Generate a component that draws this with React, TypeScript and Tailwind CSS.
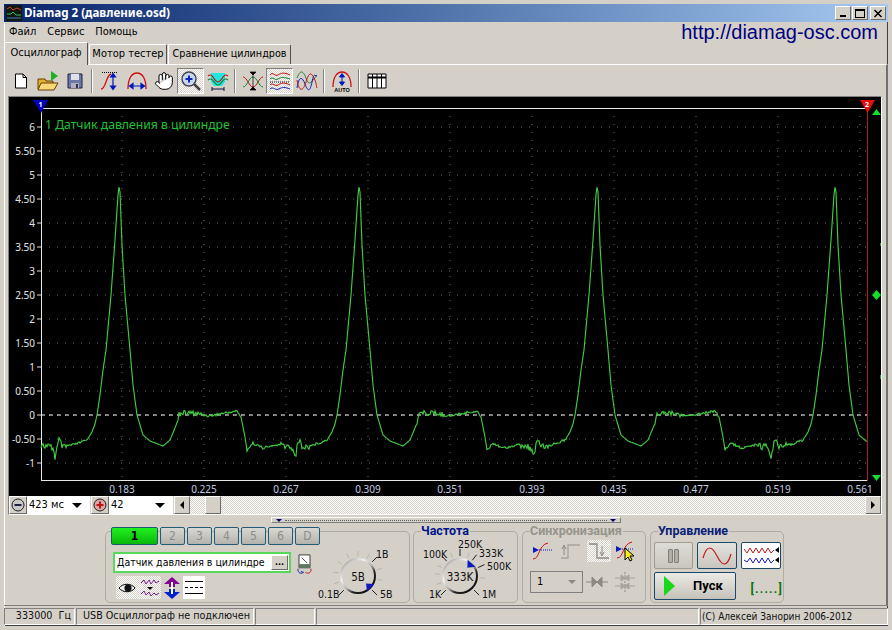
import type { ReactNode } from 'react';
import { Hand } from 'lucide-react';

const UI = "font-['DejaVu_Sans_Condensed','Roboto',sans-serif]";
const DITHER = 'bg-[repeating-conic-gradient(#ffffff_0_25%,#d4d0c8_0_50%)] bg-[length:2px_2px]';
const SUNKEN = 'border border-t-[#808080] border-l-[#808080] border-b-white border-r-white';
const RAISED = 'border border-t-white border-l-white border-b-[#6b6b6b] border-r-[#6b6b6b]';
const KNOB_FONT = 'DejaVu Sans Condensed, Roboto, sans-serif';

// one period of the pressure curve: offset from the peak, screen y
const SHAPE: [number, number][] = [
    [-78, 445], [-66, 448], [-64, 457], [-60, 440], [-56, 448], [-40, 443], [-32, 440], [-27, 432], [-24, 424],
    [-22, 415], [-19, 395], [-16, 370], [-13, 350], [-8, 295], [-4, 240], [-1, 195], [0, 187], [1, 192], [3, 245],
    [6, 295], [11, 350], [14, 385], [18, 415], [24, 435], [31, 441], [44, 446], [51, 440], [58, 423], [60, 413],
    [75, 413], [90, 416], [100, 414], [118, 411], [122, 417], [126, 437], [128, 450], [134, 443], [144, 448],
    [158, 445], [162, 445],
];
const PEAKS = [119, 359, 597, 835];

function noise(x: number) {
    const s = Math.sin(x * 12.9898) * 43758.5453;
    return (s - Math.floor(s)) * 2 - 1;
}

function tracePoints() {
    const pts: string[] = [];
    for (let x = 41; x <= 867; x++) {
        const peak = PEAKS.find((p) => x - p <= 160 && x - p >= -78) ?? 835;
        const dx = x - peak;
        let y = 445;
        for (let i = 0; i < SHAPE.length - 1; i++) {
            const [x0, y0] = SHAPE[i];
            const [x1, y1] = SHAPE[i + 1];
            if (dx >= x0 && dx <= x1) {
                y = y0 + ((y1 - y0) * (dx - x0)) / (x1 - x0);
                break;
            }
        }
        let amp = 0;
        if (dx >= -78 && dx < -48) amp = 3.5;
        else if (dx >= -48 && dx < -30) amp = 1.2;
        else if (dx >= 58 && dx < 85) amp = 2.5;
        else if (dx >= 85 && dx < 122) amp = 1.2;
        else if (dx >= 128) amp = 1.2;
        pts.push(`${x},${(y + noise(x) * amp).toFixed(1)}`);
    }
    return pts.join(' ');
}

const yLabels = ['6', '5.50', '5', '4.50', '4', '3.50', '3', '2.50', '2', '1.50', '1', '0.50', '0', '-0.50', '-1'];
const xLabels = ['0.183', '0.225', '0.267', '0.309', '0.351', '0.393', '0.435', '0.477', '0.519', '0.561'];

function Chart() {
    return (
        <svg viewBox="9 97 872 399" className="block w-[872px] h-[399px] bg-black">
            {yLabels.map((l, i) => {
                const y = 127 + i * 24;
                return (
                    <g key={l}>
                        <line x1="41" x2="867" y1={y} y2={y} stroke="#6a6a6a" strokeDasharray="1 7" />
                        <line x1="37" x2="41" y1={y} y2={y} stroke="#e0e0e0" />
                        <text x="35" y={y + 4} textAnchor="end" fontSize="10" fill="#e4e4e4" fontFamily="Noto Sans">{l}</text>
                    </g>
                );
            })}
            {xLabels.map((l, i) => {
                const x = 122 + i * 82;
                return (
                    <g key={l}>
                        <line x1={x} x2={x} y1="108" y2="484" stroke="#6a6a6a" strokeDasharray="1 7" />
                        <text x={x} y="493" textAnchor="middle" fontSize="10" fill="#c4cce0" fontFamily="Noto Sans">{l}</text>
                    </g>
                );
            })}
            <line x1="41" x2="867" y1="415" y2="415" stroke="#ffffff" strokeDasharray="4 4" />
            <path d="M41 108.5H867M41.5 108V480M41 480.5H867" stroke="#e8e8e8" fill="none" />
            <line x1="867.5" x2="867.5" y1="108" y2="481" stroke="#a82020" />
            <polyline points={tracePoints()} fill="none" stroke="#40cc40" strokeWidth="1.15" />
            <text x="45" y="129" fontSize="12.2" fill="#20c030" fontFamily="Noto Sans">1 Датчик давления в цилиндре</text>
            <path d="M33 100H48L41 113Z" fill="#0000c0" />
            <text x="40.5" y="107" textAnchor="middle" fontSize="7" fontWeight="700" fill="#fff" fontFamily="Noto Sans">1</text>
            <path d="M860 100H875L867.5 113Z" fill="#e01010" />
            <text x="867" y="107" textAnchor="middle" fontSize="7" fontWeight="700" fill="#fff" fontFamily="Noto Sans">2</text>
            <path d="M872 115L876.5 109L881 115Z" fill="#10e030" />
            <path d="M872 475L876.5 481L881 475Z" fill="#10e030" />
            <path d="M876.5 290L881 295L876.5 300L872 295Z" fill="#10e030" />
            <path d="M880.5 243V246M880.5 375V379" stroke="#10a030" />
        </svg>
    );
}

function Tool({ children, pressed, w = 27 }: { children: ReactNode; pressed?: boolean; w?: number }) {
    return (
        <div
            style={{ width: w }}
            className={`h-[26px] flex items-center justify-center ${pressed ? `${DITHER} border border-t-[#808080] border-l-[#808080] border-b-white border-r-white` : ''}`}
        >
            {children}
        </div>
    );
}

const Sep = () => <div className="w-[2px] h-[24px] mx-[3px] border-l border-l-[#808080] border-r border-r-white" />;

function ToolIcon({ children }: { children: ReactNode }) {
    return <svg viewBox="0 0 22 22" className="w-[22px] h-[22px]">{children}</svg>;
}

function Toolbar() {
    return (
        <div className="h-[31px] pl-[2px] flex items-center">
            <Tool>
                <ToolIcon><path d="M5.5 4H13L16.5 7.5V18H5.5Z" fill="#fff" stroke="#000" /><path d="M13 4V7.5H16.5" fill="none" stroke="#000" /></ToolIcon>
            </Tool>
            <Tool>
                <ToolIcon>
                    <path d="M1 9H8L9 11H16V19H1Z" fill="#e8b030" stroke="#604000" />
                    <path d="M4 13H21L17 20H1Z" fill="#f8d878" stroke="#604000" />
                    <path d="M14 1L21 6L14 11Z" fill="#20b020" />
                </ToolIcon>
            </Tool>
            <Tool>
                <ToolIcon>
                    <path d="M4 4H18V18H4Z" fill="#6a78a8" stroke="#202040" />
                    <path d="M7 4H15V10H7Z" fill="#e0e0e8" />
                    <path d="M7 13H15V18H7Z" fill="#b0b0bc" />
                    <path d="M12 14H14V18H12Z" fill="#303060" />
                </ToolIcon>
            </Tool>
            <Sep />
            <Tool>
                <ToolIcon>
                    <path d="M2 19C7 19 7 5 12 4" fill="none" stroke="#d01010" strokeWidth="1.3" />
                    <path d="M3 2.5H18" stroke="#000" strokeDasharray="1 1" />
                    <path d="M14 4V19M11.5 7L14 3.5L16.5 7ZM11.5 16L14 19.5L16.5 16Z" stroke="#0018c0" fill="#0018c0" strokeWidth="1.2" />
                </ToolIcon>
            </Tool>
            <Tool>
                <ToolIcon>
                    <path d="M2 19C2 8 6 3 11 3S20 8 20 19" fill="none" stroke="#d01010" strokeWidth="1.3" />
                    <path d="M4 16H18M7 13.5L3.5 16L7 18.5ZM15 13.5L18.5 16L15 18.5Z" stroke="#0018c0" fill="#0018c0" strokeWidth="1.2" />
                </ToolIcon>
            </Tool>
            <Tool>
                <Hand size={20} fill="#ffffff" stroke="#000000" strokeWidth={1.2} />
            </Tool>
            <Tool pressed>
                <ToolIcon>
                    <path d="M13 13L20 20" stroke="#404040" strokeWidth="2.5" />
                    <circle cx="9" cy="9" r="7" fill="#c8d8f0" stroke="#404050" strokeWidth="1.4" />
                    <path d="M5.5 9H12.5M9 5.5V12.5" stroke="#1020c0" strokeWidth="2" />
                </ToolIcon>
            </Tool>
            <Tool>
                <ToolIcon>
                    <path d="M4 3H18V12L15 16H7L4 12Z" fill="#20e8e0" />
                    <path d="M1 6C6 2 7 12 11 12S16 2 21 6" fill="none" stroke="#c01010" strokeWidth="1.1" />
                    <path d="M1 10C6 6 7 15 11 15S16 6 21 10" fill="none" stroke="#108030" strokeWidth="1.1" />
                    <path d="M5 19H17M5 17V21M17 17V21" stroke="#101040" />
                </ToolIcon>
            </Tool>
            <Sep />
            <Tool>
                <ToolIcon>
                    <path d="M1 7C5 7 7 17 11 17S17 7 21 7" fill="none" stroke="#c01010" />
                    <path d="M1 17C5 17 7 7 11 7S17 17 21 17" fill="none" stroke="#108030" />
                    <path d="M11 3V19M8 2H14L11 5ZM8 20H14L11 17Z" stroke="#000" fill="#000" strokeWidth="0.7" />
                </ToolIcon>
            </Tool>
            <Tool pressed>
                <ToolIcon>
                    <path d="M1 5C4 1 6 7 9 5S15 2 21 5" fill="none" stroke="#c01010" />
                    <path d="M1 9C4 6 6 11 9 9S15 7 21 9" fill="none" stroke="#108030" />
                    <path d="M1 12H21" stroke="#000" strokeDasharray="1 1" />
                    <path d="M1 15C4 12 6 17 9 15S15 12 21 15" fill="none" stroke="#c01010" />
                    <path d="M1 19C4 16 7 21 10 19S16 17 21 19" fill="none" stroke="#1018c0" />
                </ToolIcon>
            </Tool>
            <Tool>
                <ToolIcon>
                    <path d="M1 8C4 0 7 0 10 8S14 14 21 5" fill="none" stroke="#108030" />
                    <path d="M1 18C3 6 6 6 9 14S14 22 16 12 19 6 21 6" fill="none" stroke="#1018c0" />
                    <path d="M1 10C3 22 7 22 10 12S15 2 18 8 20 16 21 18" fill="none" stroke="#c01010" />
                </ToolIcon>
            </Tool>
            <Sep />
            <Tool>
                <ToolIcon>
                    <path d="M2 17C2 7 6 2 11 2S20 7 20 17" fill="none" stroke="#d01010" strokeWidth="1.3" />
                    <path d="M11 4V15M8.5 7L11 3.5L13.5 7ZM8.5 12L11 15.5L13.5 12Z" stroke="#0018c0" fill="#0018c0" />
                    <text x="11" y="21.5" textAnchor="middle" fontSize="5.5" fontWeight="700" fill="#000" fontFamily="Liberation Sans">AUTO</text>
                </ToolIcon>
            </Tool>
            <Sep />
            <Tool>
                <ToolIcon>
                    <path d="M2 4H20V18H2Z" fill="#fff" stroke="#000" />
                    <path d="M2 7.5H20" stroke="#000" strokeWidth="2" />
                    <path d="M6.5 4V18M11 4V18M15.5 4V18" stroke="#000" />
                </ToolIcon>
            </Tool>
        </div>
    );
}

function Caret() {
    return <div className="w-0 h-0 border-x-[5px] border-x-transparent border-t-[5px] border-t-black" />;
}

function Zoomer({ sign, color, text, w }: { sign: 'minus' | 'plus'; color: string; text: string; w: string }) {
    return (
        <>
            <div className={`w-[18px] h-[18px] flex items-center justify-center bg-[#d4d0c8] ${RAISED}`}>
                <svg viewBox="0 0 14 14" className="w-[14px] h-[14px]">
                    <circle cx="7" cy="7" r="6" fill={sign === 'minus' ? '#c8c8c8' : '#d8a8a8'} stroke="#202020" />
                    <path d={sign === 'minus' ? 'M3.5 7H10.5' : 'M3.5 7H10.5M7 3.5V10.5'} stroke={color} strokeWidth="2" />
                </svg>
            </div>
            <div className={`${w} h-[18px] bg-white flex items-center justify-between pl-[2px] pr-[8px] text-[11px] text-black mr-px`}>
                <span>{text}</span>
                <Caret />
            </div>
        </>
    );
}

function ScrollBtn({ dir }: { dir: 'l' | 'r' }) {
    return (
        <div className={`w-[16px] h-[18px] shrink-0 bg-[#d4d0c8] flex items-center justify-center ${RAISED}`}>
            <div className={`w-0 h-0 border-y-[4px] border-y-transparent ${dir === 'l' ? 'border-r-[4px] border-r-black' : 'border-l-[4px] border-l-black'}`} />
        </div>
    );
}

function ChartPanel() {
    return (
        <div className={`ml-[3px] w-[874px] ${SUNKEN}`}>
            <Chart />
            <div className="h-[18px] flex items-center">
                <Zoomer sign="minus" color="#202040" text="423 мс" w="w-[63px]" />
                <Zoomer sign="plus" color="#c01010" text="42" w="w-[64px]" />
                <ScrollBtn dir="l" />
                <div className={`flex-1 h-[18px] ${DITHER} pl-[15px]`}>
                    <div className={`w-[16px] h-[18px] bg-[#d4d0c8] ${RAISED}`} />
                </div>
                <ScrollBtn dir="r" />
            </div>
        </div>
    );
}

function GroupBox({ title, titleColor, className, children }: { title?: string; titleColor?: string; className: string; children: ReactNode }) {
    return (
        <div className={`relative h-[72px] border border-[#b0aca0] rounded-[5px] ${className}`}>
            {title && (
                <span className={`absolute left-[7px] -top-[9px] bg-[#d4d0c8] pr-px font-['Roboto',sans-serif] text-[12.5px] leading-[15px] font-bold ${titleColor}`}>{title}</span>
            )}
            {children}
        </div>
    );
}

type Tick = { a: number; long?: boolean };

function Knob({ id, cx, cy, label, pointer, ticks }: { id: string; cx: number; cy: number; label: string; pointer: number; ticks: Tick[] }) {
    const pos = (a: number, r: number) => {
        const rad = ((a - 90) * Math.PI) / 180;
        return [cx + Math.cos(rad) * r, cy + Math.sin(rad) * r];
    };
    const [tipX, tipY] = pos(pointer, 11);
    const [b1x, b1y] = pos(pointer - 17, 18);
    const [b2x, b2y] = pos(pointer + 17, 18);
    return (
        <g>
            <defs>
                <linearGradient id={id} x1="0.1" y1="0.1" x2="0.85" y2="0.9">
                    <stop offset="0" stopColor="#a8a8a8" />
                    <stop offset="0.3" stopColor="#f4f4f4" />
                    <stop offset="0.55" stopColor="#b0b0b0" />
                    <stop offset="0.75" stopColor="#202020" />
                    <stop offset="1" stopColor="#101010" />
                </linearGradient>
            </defs>
            {ticks.map((t, i) => {
                const [x0, y0] = pos(t.a, 20);
                const [x1, y1] = pos(t.a, t.long ? 27 : 25);
                return <line key={i} x1={x0} y1={y0} x2={x1} y2={y1} stroke={t.long ? '#202020' : '#b8b4a8'} />;
            })}
            <circle cx={cx} cy={cy} r="17" fill="#d4d0c8" stroke={`url(#${id})`} strokeWidth="2" />
            <path d={`M${tipX} ${tipY}L${b1x} ${b1y}L${b2x} ${b2y}Z`} fill="#1018c0" />
            <text x={cx} y={cy + 4.5} textAnchor="middle" fontSize="11.5" fill="#101010" fontFamily={KNOB_FONT}>{label}</text>
        </g>
    );
}

const AMP_TICKS: Tick[] = [
    { a: -135, long: true }, { a: -108 }, { a: -81 }, { a: -54 }, { a: -27 }, { a: 0 }, { a: 27 }, { a: 45, long: true }, { a: 72 }, { a: 100 }, { a: 135, long: true },
];
const FREQ_TICKS: Tick[] = [
    { a: -135, long: true }, { a: -110 }, { a: -85 }, { a: -65 }, { a: -42, long: true }, { a: -22 }, { a: 0, long: true }, { a: 22 }, { a: 38, long: true }, { a: 65, long: true }, { a: 95 }, { a: 135, long: true },
];

function ChannelBtn({ label, active }: { label: string; active?: boolean }) {
    if (active) {
        return (
            <div className="w-[47px] h-[18px] rounded-[2px] border border-[#1a5a70] bg-gradient-to-b from-[#20f020] to-[#08b808] flex items-center justify-center text-[12px] font-bold text-black">
                {label}
            </div>
        );
    }
    return (
        <div className="w-[25px] h-[18px] rounded-[2px] border border-[#245a78] bg-gradient-to-b from-[#d8d8d4] to-[#b4b2ac] flex items-center justify-center text-[12px] text-[#8c8c88]">
            {label}
        </div>
    );
}

function ChannelGroup() {
    return (
        <GroupBox className="w-[305px]">
            <div className="flex flex-col">
                <div className="flex gap-[2px] ml-[5px] -mt-[5px]">
                    <ChannelBtn label="1" active />
                    {['2', '3', '4', '5', '6', 'D'].map((l) => <ChannelBtn key={l} label={l} />)}
                </div>
                <div className="flex ml-[7px] mt-[7px]">
                    <div className="flex flex-col w-[200px]">
                        <div className="flex items-start h-[24px]">
                            <div className="w-[178px] h-[21px] bg-white border-[2px] border-[#58d858] flex items-center justify-between pl-[2px] pr-[1px] text-[10.5px] text-black shrink-0">
                                <span className="whitespace-nowrap">Датчик давления в цилиндре</span>
                                <div className={`w-[17px] h-[15px] shrink-0 bg-[#d4d0c8] flex items-center justify-center text-[9px] leading-none font-bold ${RAISED}`}>...</div>
                            </div>
                            <svg viewBox="0 0 18 24" className="w-[17px] h-[22px] ml-[5px] mt-[2px] shrink-0">
                                <path d="M3 1H15V15H3Z" fill="#fff" stroke="#303030" />
                                <path d="M3 11H15V15H3Z" fill="#607860" />
                                <path d="M6 4L12 10" stroke="#404040" />
                                <path d="M2 16C1 21 6 22 8 20M8 20L5 19" fill="none" stroke="#1018c0" />
                                <path d="M16 16C17 21 12 22 10 20" fill="none" stroke="#c01010" />
                            </svg>
                        </div>
                        <div className="flex ml-[3px]">
                            <div className={`w-[22px] h-[23px] ${DITHER} flex items-center justify-center`}>
                                <svg viewBox="0 0 18 12" className="w-[18px] h-[12px]">
                                    <path d="M1 6C5 1 13 1 17 6C13 11 5 11 1 6Z" fill="#f0f0f0" stroke="#000" />
                                    <circle cx="10" cy="6" r="3.6" fill="#101010" />
                                </svg>
                            </div>
                            <div className={`w-[23px] h-[23px] ${DITHER} flex items-center justify-center`}>
                                <svg viewBox="0 0 20 20" className="w-[20px] h-[20px]">
                                    <path d="M1 5L4 2L6 6L9 2L11 6L14 2L16 5L19 3" fill="none" stroke="#801890" />
                                    <path d="M7 9H13L10 12Z" fill="#000" />
                                    <path d="M1 16L4 13L6 17L9 14L11 18L14 15L16 17L19 15" fill="none" stroke="#801890" />
                                </svg>
                            </div>
                            <div className="w-[22px] h-[23px] flex items-center justify-center">
                                <svg viewBox="0 0 18 22" className="w-[18px] h-[22px]">
                                    <path d="M9 0L17 7H12V10H6V7H1Z" fill="#800090" />
                                    <path d="M9 22L17 15H12V12H6V15H1Z" fill="#0020d0" />
                                    <path d="M8 5H10V17H8Z" fill="#fff" />
                                </svg>
                            </div>
                            <div className="w-[22px] h-[23px] bg-white flex flex-col justify-center gap-[5px] px-[2px]">
                                <div className="h-px bg-black" />
                                <div className="h-px border-t border-dashed border-black" />
                                <div className="h-px bg-black" />
                            </div>
                        </div>
                    </div>
                    <svg viewBox="315 545 80 57" className="w-[80px] h-[57px] -mt-[6px] ml-[2px] shrink-0">
                        <Knob id="ampRing" cx={358} cy={575} label="5В" pointer={133} ticks={AMP_TICKS} />
                        <text x="376" y="557" fontSize="10.5" fill="#101010" fontFamily={KNOB_FONT}>1В</text>
                        <text x="318" y="597" fontSize="10.5" fill="#101010" fontFamily={KNOB_FONT}>0.1В</text>
                        <text x="380" y="597" fontSize="10.5" fill="#101010" fontFamily={KNOB_FONT}>5В</text>
                    </svg>
                </div>
            </div>
        </GroupBox>
    );
}

function FreqGroup() {
    return (
        <GroupBox title="Частота" titleColor="text-[#00148c]" className="w-[105px]">
            <svg viewBox="414 535 103 66" className="w-[103px] h-[66px] mt-[4px]">
                <Knob id="freqRing" cx={460} cy={575} label="333K" pointer={42} ticks={FREQ_TICKS} />
                <text x="458" y="547" fontSize="10.5" fill="#101010" fontFamily={KNOB_FONT}>250K</text>
                <text x="423" y="557" fontSize="10.5" fill="#101010" fontFamily={KNOB_FONT}>100K</text>
                <text x="479" y="556" fontSize="10.5" fill="#101010" fontFamily={KNOB_FONT}>333K</text>
                <text x="487" y="569" fontSize="10.5" fill="#101010" fontFamily={KNOB_FONT}>500K</text>
                <text x="429" y="597" fontSize="10.5" fill="#101010" fontFamily={KNOB_FONT}>1K</text>
                <text x="482" y="597" fontSize="10.5" fill="#101010" fontFamily={KNOB_FONT}>1M</text>
            </svg>
        </GroupBox>
    );
}

function SyncGroup() {
    return (
        <GroupBox title="Синхронизация" titleColor="text-[#96948c]" className="w-[124px]">
            <div className="flex flex-col pl-[7px] pt-[8px]">
                <div className="flex items-center h-[22px] gap-[3px]">
                    <svg viewBox="0 0 24 20" className="w-[24px] h-[20px]">
                        <path d="M3 18C10 18 8 4 18 2" fill="none" stroke="#d01010" />
                        <path d="M3 6L9 9L3 12Z" fill="#1018c0" />
                        <path d="M9 9H22" stroke="#1018c0" strokeDasharray="1 1" />
                    </svg>
                    <svg viewBox="0 0 24 20" className="w-[24px] h-[20px] ml-[2px]">
                        <path d="M2 17H9V4H21" fill="none" stroke="#a8a49c" strokeWidth="1.3" />
                        <path d="M5 14V5M3 8L5 4L7 8" fill="none" stroke="#8c8a82" />
                    </svg>
                    <div className={`w-[24px] h-[22px] ${DITHER} flex items-center justify-center ml-[1px]`}>
                        <svg viewBox="0 0 24 20" className="w-[24px] h-[20px]">
                            <path d="M2 3H10V17H22" fill="none" stroke="#8c8a82" strokeWidth="1.3" />
                            <path d="M15 5V14M13 11L15 15L17 11" fill="none" stroke="#8c8a82" />
                        </svg>
                    </div>
                    <svg viewBox="0 0 24 22" className="w-[24px] h-[22px]">
                        <path d="M3 18C10 18 8 4 18 2" fill="none" stroke="#d01010" />
                        <path d="M2 6L8 9L2 12Z" fill="#1018c0" />
                        <path d="M8 9H20" stroke="#1018c0" strokeDasharray="1 1" />
                        <path d="M11 8V20L14 17L16 21L18 20L16 16H20Z" fill="#f8e820" stroke="#000" />
                    </svg>
                </div>
                <div className="flex items-center mt-[9px]">
                    <div className="w-[53px] h-[22px] border border-[#808080] flex items-center justify-between px-[6px] text-[11px] text-black">
                        <span>1</span>
                        <div className="w-0 h-0 border-x-[4px] border-x-transparent border-t-[4px] border-t-[#8c8a82]" />
                    </div>
                    <svg viewBox="0 0 24 18" className="w-[24px] h-[18px] ml-[2px]">
                        <path d="M1 9H8M23 9H16M7 4L12 9L7 14ZM17 4L12 9L17 14Z" stroke="#8c8a82" fill="#8c8a82" />
                    </svg>
                    <svg viewBox="0 0 24 22" className="w-[24px] h-[22px] ml-[4px]">
                        <path d="M12 1V21" stroke="#8c8a82" strokeDasharray="2 1" />
                        <path d="M2 7H8M22 7H16M22 15H16M2 15H8M8 4L12 7L8 10ZM16 4L12 7L16 10ZM8 12L12 15L8 18ZM16 12L12 15L16 18Z" stroke="#a8a49c" fill="#a8a49c" />
                    </svg>
                </div>
            </div>
        </GroupBox>
    );
}

function ControlGroup() {
    return (
        <GroupBox title="Управление" titleColor="text-[#0a1e78]" className="w-[134px]">
            <div className="flex flex-col pl-[3px] pt-[10px]">
                <div className="flex h-[27px] gap-[4px]">
                    <div className="w-[39px] h-[27px] border border-[#a09c94] rounded-[2px] bg-gradient-to-b from-[#dedcd6] to-[#c8c6be] flex items-center justify-center gap-px">
                        <div className="w-[5px] h-[14px] rounded-[1px] border border-[#80807a] bg-[#b0aea6]" />
                        <div className="w-[5px] h-[14px] rounded-[1px] border border-[#80807a] bg-[#b0aea6]" />
                    </div>
                    <div className="w-[40px] h-[27px] border border-[#1a4a68] rounded-[2px] bg-gradient-to-b from-[#e4e2dc] to-[#c8c6be] flex items-center justify-center">
                        <svg viewBox="0 0 32 20" className="w-[32px] h-[20px]">
                            <path d="M2 12C6 -2 11 0 16 10S26 22 30 8" fill="none" stroke="#c01818" strokeWidth="1.2" />
                        </svg>
                    </div>
                    <div className="w-[40px] h-[27px] border border-[#1a4a68] rounded-[2px] bg-white flex items-center justify-center">
                        <svg viewBox="0 0 36 22" className="w-[36px] h-[22px]">
                            <path d="M1 4L4 8L7 3L10 8L13 3L16 8L19 3L22 8L25 3L28 8L31 5" fill="none" stroke="#c01818" />
                            <path d="M32 5L36 2V8Z" fill="#000" />
                            <path d="M1 15L4 17L7 13L10 18L13 13L16 18L19 13L22 18L25 13L28 18L31 15" fill="none" stroke="#1018c0" />
                            <path d="M32 15L36 12V18Z" fill="#000" />
                        </svg>
                    </div>
                </div>
                <div className="flex items-center mt-[3px]">
                    <div className="w-[83px] h-[28px] border border-[#1a4a68] rounded-[2px] bg-gradient-to-b from-[#eceae4] to-[#c4c2ba] flex items-center pl-[9px]">
                        <div className="w-0 h-0 border-y-[10px] border-y-transparent border-l-[11px] border-l-[#18d818]" />
                        <span className="ml-[18px] font-['Roboto',sans-serif] text-[13px] font-bold text-black">Пуск</span>
                    </div>
                    <span className="ml-[15px] mt-[5px] font-['Roboto',sans-serif] text-[12px] font-bold text-[#107010] tracking-[1.2px] whitespace-nowrap">[.....]</span>
                </div>
            </div>
        </GroupBox>
    );
}

function Splitter() {
    return (
        <div className="h-[8px] flex items-end justify-center">
            <div className="w-[350px] h-[6px] border border-[#808080] border-t-white border-l-white flex items-center justify-between px-[4px]">
                <div className="w-0 h-0 border-x-[3px] border-x-transparent border-t-[3px] border-t-[#000060]" />
                <div className="flex-1 mx-[3px] border-t border-dotted border-[#606060]" />
                <div className="w-0 h-0 border-x-[3px] border-x-transparent border-t-[3px] border-t-[#000060]" />
            </div>
        </div>
    );
}

function StatusCell({ className, children }: { className: string; children?: ReactNode }) {
    return (
        <div className={`h-[17px] mb-px flex items-center text-[10.7px] text-[#101010] whitespace-nowrap ${SUNKEN} ${className}`}>
            {children}
        </div>
    );
}

export default function App() {
    return (
        <div className={`w-[892px] h-[630px] overflow-hidden bg-[#d4d0c8] flex flex-col border-[4px] border-[#d4d0c8] shadow-[inset_1px_1px_0_#fff,inset_-1px_-1px_0_#404040] ${UI}`}>
            <div className="h-[18px] shrink-0 flex items-center bg-gradient-to-r from-[#0a246a] to-[#a6caf0] pl-[2px] pr-[2px]">
                <svg viewBox="0 0 16 16" className="w-[16px] h-[16px] shrink-0">
                    <rect width="16" height="16" fill="#101810" />
                    <path d="M1 4L4 2L7 5L11 3L15 5" fill="none" stroke="#d04030" />
                    <path d="M1 9H5L7 7L10 10H15" fill="none" stroke="#30c060" />
                    <path d="M1 13H15" stroke="#4080c0" />
                </svg>
                <span className="ml-[2px] text-[11.6px] font-bold font-['Noto_Sans',sans-serif] text-white whitespace-nowrap">Diamag 2 (давление.osd)</span>
                <div className="ml-auto flex">
                    <div className={`w-[16px] h-[14px] bg-[#d4d0c8] flex items-end justify-center pb-[2px] ${RAISED}`}><div className="w-[6px] h-[2px] bg-black" /></div>
                    <div className={`w-[16px] h-[14px] ml-[1px] bg-[#d4d0c8] flex items-center justify-center ${RAISED}`}><div className="w-[10px] h-[9px] border border-black border-t-2" /></div>
                    <div className={`w-[16px] h-[14px] ml-[2px] bg-[#d4d0c8] flex items-center justify-center ${RAISED}`}>
                        <svg viewBox="0 0 10 9" className="w-[10px] h-[9px]"><path d="M1.5 1L8.5 8M8.5 1L1.5 8" stroke="#000" strokeWidth="1.5" /></svg>
                    </div>
                </div>
            </div>

            <div className="h-[20px] shrink-0 flex items-center text-[11px] text-black pl-[5px]">
                <span>Файл</span>
                <span className="ml-[11px]">Сервис</span>
                <span className="ml-[11px]">Помощь</span>
                <span className="ml-auto mr-[10px] text-[20px] font-['Liberation_Sans',sans-serif] text-[#000080] leading-none">http://diamag-osc.com</span>
            </div>

            <div className="h-[22px] shrink-0 flex items-end text-[11px] text-black">
                <div className="w-[84px] h-[23px] -mb-px relative bg-[#d4d0c8] border border-b-0 border-t-white border-l-white border-r-[#505050] rounded-t-[2px] flex items-center justify-center pb-[2px] whitespace-nowrap">Осциллограф</div>
                <div className="w-[78px] h-[20px] ml-px border border-b-0 border-t-white border-l-white border-r-[#505050] rounded-t-[2px] flex items-center justify-center whitespace-nowrap">Мотор тестер</div>
                <div className="w-[123px] h-[20px] ml-px border border-b-0 border-t-white border-l-white border-r-[#505050] rounded-t-[2px] flex items-center justify-center whitespace-nowrap text-[10.7px]">Сравнение цилиндров</div>
            </div>

            <div className="flex-1 flex flex-col border-t border-t-white border-l border-l-white border-r-2 border-r-[#707070]">
                <Toolbar />
                <ChartPanel />
                <Splitter />
                <div className="flex pl-[100px] pt-[8px]">
                    <ChannelGroup />
                    <div className="ml-[3px]"><FreqGroup /></div>
                    <div className="ml-[4px]"><SyncGroup /></div>
                    <div className="ml-[4px]"><ControlGroup /></div>
                </div>
            </div>

            <div className="h-[21px] shrink-0 flex items-end gap-[1px] border-t border-t-[#808080]">
                <StatusCell className="w-[71px] justify-end pr-[3px]">333000&nbsp;&nbsp;Гц</StatusCell>
                <StatusCell className="w-[178px] pl-[6px]">USB Осциллограф не подключен</StatusCell>
                <StatusCell className="w-[60px]" />
                <StatusCell className="w-[383px]" />
                <StatusCell className="flex-1 pl-[1px] text-[10px]">(С) Алексей Занорин 2006-2012</StatusCell>
            </div>
        </div>
    );
}
